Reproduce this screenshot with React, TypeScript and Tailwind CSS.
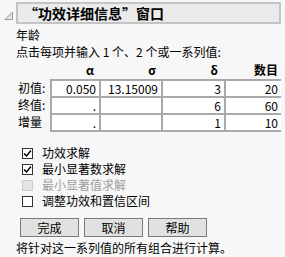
import React from 'react'

const font = { fontFamily: '"Noto Sans CJK SC", "Liberation Sans", sans-serif' }

const rows = [
  { label: '初值:', values: ['0.050', '13.15009', '3', '20'] },
  { label: '终值:', values: ['.', '', '6', '60'] },
  { label: '增量', values: ['.', '', '1', '10'] },
]

const Check = ({ checked, disabled, label }: { checked?: boolean; disabled?: boolean; label: string }) => (
  <div className="flex items-center h-[16px]">
    <div
      className={
        disabled
          ? 'w-[11px] h-[11px] border border-[#cccccc] bg-[#e5e5e5]'
          : 'w-[11px] h-[11px] border border-[#333333] bg-white flex items-center justify-center'
      }
    >
      {checked && (
        <svg width="9" height="9" viewBox="0 0 9 9">
          <path d="M1 4.5 L3.5 7 L8 1.5" fill="none" stroke="#000" strokeWidth="1.5" />
        </svg>
      )}
    </div>
    <span className={disabled ? 'ml-[9px] text-[12px] text-[#a0a0a0]' : 'ml-[9px] text-[12px] text-black'}>
      {label}
    </span>
  </div>
)

export default function App() {
  return (
    <div className="w-[285px] h-[257px] bg-[#f7f7f7] text-black overflow-hidden" style={font}>
      {/* title bar */}
      <div className="flex items-center pt-[2px]">
        <svg width="16" height="22" viewBox="0 0 16 22">
          <path d="M5 17.5 L12.5 17.5 L12.5 10 Z" fill="#e6e6e6" stroke="#9a9a9a" strokeWidth="1" />
        </svg>
        <div className="w-[265px] h-[22px] bg-[#ebebeb] border-2 border-[#c4c4c4] flex items-center pl-[6px]">
          <span className="text-[14px] font-bold leading-none">“功效详细信息”窗口</span>
        </div>
      </div>

      <div className="pl-[16px]">
        <div className="text-[12px] leading-[17px] mt-[2px]">年龄</div>
        <div className="text-[12px] leading-[17px]">点击每项并输入 1 个、2 个或一系列值:</div>

        {/* grid */}
        <div className="flex mt-[1px]">
          <div className="w-[34px] flex flex-col">
            <div className="h-[18px]" />
            {rows.map((r) => (
              <div key={r.label} className="h-[17px] flex items-center text-[12px] pl-[2px]">
                {r.label}
              </div>
            ))}
          </div>
          <div className="flex flex-col">
            <div className="grid grid-cols-[49px_62px_63px_57px] h-[18px] text-[12px] font-bold items-center">
              <div className="text-right pr-[5px]">α</div>
              <div className="text-right pr-[5px]">σ</div>
              <div className="text-right pr-[6px]">δ</div>
              <div className="text-right pr-[3px]">数目</div>
            </div>
            <div className="grid grid-cols-[47px_60px_61px_55px] gap-[2px] p-[2px] bg-[#a9a9a9] w-[231px]">
              {rows.map((r) =>
                r.values.map((v, i) => (
                  <div
                    key={r.label + i}
                    className="bg-white h-[15px] flex items-center justify-end pr-[3px] text-[12px] leading-none"
                  >
                    {v}
                  </div>
                ))
              )}
            </div>
          </div>
        </div>

        {/* options */}
        <div className="flex flex-col pl-[6px] mt-[13px]">
          <Check checked label="功效求解" />
          <Check checked label="最小显著数求解" />
          <Check disabled label="最小显著值求解" />
          <Check label="调整功效和置信区间" />
        </div>

        <div className="flex gap-[5px] pl-[4px] mt-[9px]">
          {['完成', '取消', '帮助'].map((b) => (
            <button
              key={b}
              className="w-[59px] h-[19px] bg-[#e1e1e1] border border-[#7a7a7a] text-[12px] leading-none flex items-center justify-center"
            >
              {b}
            </button>
          ))}
        </div>

        <div className="text-[12px] leading-[17px] mt-[2px]">将针对这一系列值的所有组合进行计算。</div>
      </div>
    </div>
  )
}
